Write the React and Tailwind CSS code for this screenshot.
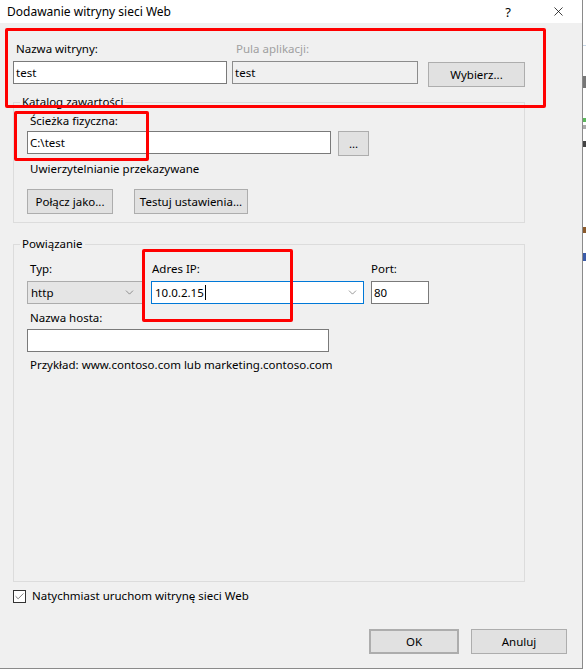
import { Check, ChevronDown, X } from "lucide-react";

function Field({ className = "", children, bg = "bg-white", border = "border-[#7a7a7a]" }) {
  return (
    <div className={`h-[23px] border ${border} ${bg} flex items-center px-[2px] ${className}`}>
      {children}
    </div>
  );
}

function WinButton({ className = "", children }) {
  return (
    <button className={`h-[25px] border border-[#adadad] bg-[#e1e1e1] text-black text-[11.5px] flex items-center justify-center ${className}`}>
      {children}
    </button>
  );
}

export default function App() {
  return (
    <div className="w-[586px] h-[670px] flex bg-white font-['Noto_Sans',sans-serif] text-[11.5px] leading-[16px] text-black overflow-hidden">
      {/* -------------------- Dialog -------------------- */}
      <div className="w-[583px] h-[669px] border-r border-b border-[#8a8a8a] flex flex-col">
        {/* Title bar */}
        <div className="h-[23px] bg-white flex items-center pl-[7px] shrink-0">
          <span className="flex-1 text-[12px]">Dodawanie witryny sieci Web</span>
          <span className="w-[14px] text-center text-[13px] mr-[36px]">?</span>
          <X size={15} strokeWidth={1.2} className="mr-[16px]" />
        </div>

        {/* Body */}
        <div className="relative flex-1 bg-[#f0f0f0] pl-[13px] pt-[18px] flex flex-col">
          {/* Row 1 */}
          <div className="flex items-end">
            <div className="w-[214px] flex flex-col">
              <span className="pl-[3px] mb-[4px]">Nazwa witryny:</span>
              <Field>test</Field>
            </div>
            <div className="w-[186px] ml-[5px] flex flex-col">
              <span className="pl-[4px] mb-[4px] text-[#a0a0a0]">Pula aplikacji:</span>
              <Field bg="bg-[#f0f0f0]" border="border-[#8c8c8c]" className="h-[22px]">test</Field>
            </div>
            <WinButton className="w-[97px] ml-[10px] mb-[-3px]">Wybierz...</WinButton>
          </div>

          {/* Katalog zawartości */}
          <fieldset className="w-[512px] h-[128px] mt-[11px] border border-[#dcdcdc]">
            <legend className="ml-[6px] px-[2px] leading-[14px]">Katalog zawartości</legend>
            <div className="flex flex-col pl-[13px] pt-[4px]">
              <span className="pl-[3px] mb-[2px]">Ścieżka fizyczna:</span>
              <div className="flex items-start">
                <Field className="w-[304px]">C:\test</Field>
                <WinButton className="w-[31px] ml-[7px]">...</WinButton>
              </div>
              <span className="pl-[3px] mt-[5px]">Uwierzytelnianie przekazywane</span>
              <div className="flex mt-[12px]">
                <WinButton className="w-[86px]">Połącz jako...</WinButton>
                <WinButton className="w-[114px] ml-[21px]">Testuj ustawienia...</WinButton>
              </div>
            </div>
          </fieldset>

          {/* Powiązanie */}
          <fieldset className="w-[512px] h-[345px] mt-[14px] border border-[#dcdcdc]">
            <legend className="ml-[6px] px-[2px] leading-[14px]">Powiązanie</legend>
            <div className="pl-[13px] pt-[10px]">
              <div className="flex items-start">
                <div className="w-[117px] flex flex-col">
                  <span className="pl-[3px] mb-[4px]">Typ:</span>
                  <div className="h-[23px] border border-[#acacac] bg-[#e5e5e5] flex items-center pl-[3px] pr-[7px]">
                    <span className="flex-1">http</span>
                    <ChevronDown size={13} strokeWidth={1} className="text-[#444]" />
                  </div>
                </div>
                <div className="w-[213px] ml-[7px] flex flex-col">
                  <span className="pl-[1px] mb-[4px]">Adres IP:</span>
                  <div className="h-[23px] border border-[#0078d7] bg-white flex items-center pl-[3px] pr-[4px]">
                    <span>10.0.2.15</span>
                    <span className="w-[1px] h-[15px] bg-black ml-[1px]" />
                    <span className="flex-1" />
                    <ChevronDown size={13} strokeWidth={1} className="text-[#444]" />
                  </div>
                </div>
                <div className="w-[58px] ml-[7px] flex flex-col">
                  <span className="mb-[4px]">Port:</span>
                  <Field>80</Field>
                </div>
              </div>
              <div className="flex flex-col mt-[6px]">
                <span className="pl-[3px] mb-[3px]">Nazwa hosta:</span>
                <Field className="w-[302px]" />
                <span className="pl-[3px] mt-[5px]">Przykład: www.contoso.com lub marketing.contoso.com</span>
              </div>
            </div>
          </fieldset>

          {/* Checkbox */}
          <div className="flex items-center mt-[6px]">
            <div className="w-[13px] h-[13px] border border-[#333] bg-white flex items-center justify-center">
              <Check size={11} strokeWidth={1.4} className="text-[#333]" />
            </div>
            <span className="ml-[6px]">Natychmiast uruchom witrynę sieci Web</span>
          </div>

          {/* Bottom buttons */}
          <div className="flex justify-end mt-[25px] pr-[15px]">
            <WinButton className="w-[90px] border-2 border-[#0078d7]">OK</WinButton>
            <WinButton className="w-[96px] ml-[12px]">Anuluj</WinButton>
          </div>

          {/* -------------------- Red annotation boxes -------------------- */}
          <div className="absolute left-[5px] top-[5px] w-[541px] h-[80px] border-[3px] border-[#ff0000] rounded-[2px] pointer-events-none" />
          <div className="absolute left-[14px] top-[88px] w-[135px] h-[50px] border-[3px] border-[#ff0000] rounded-[2px] pointer-events-none" />
          <div className="absolute left-[142px] top-[226px] w-[151px] h-[73px] border-[3px] border-[#ff0000] rounded-[2px] pointer-events-none" />
        </div>
      </div>

      {/* Background window strip */}
      <div className="flex-1 bg-white flex flex-col">
        <div className="h-[45px]" />
        <div className="h-[1px] bg-[#c8d8e8]" />
        <div className="h-[30px]" />
        <div className="h-[12px] bg-[#777]" />
        <div className="h-[30px]" />
        <div className="h-[4px] bg-[#5cb85c]" />
        <div className="h-[4px] bg-[#aaa] mt-[3px]" />
        <div className="h-[6px] bg-[#444] mt-[12px]" />
        <div className="h-[80px]" />
        <div className="h-[6px] bg-[#8b5a2b]" />
        <div className="h-[20px]" />
        <div className="h-[8px] bg-[#3b5ba9]" />
      </div>
    </div>
  );
}
